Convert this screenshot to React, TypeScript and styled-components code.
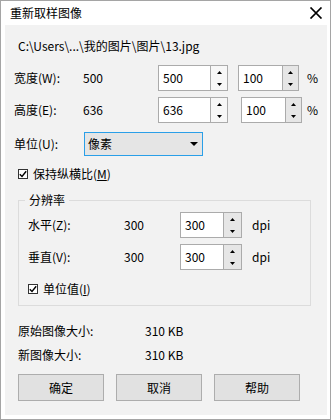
import React from 'react';
import styled, { createGlobalStyle } from 'styled-components';

const GlobalStyle = createGlobalStyle`
  html, body {
    margin: 0;
    padding: 0;
    background: #fff;
  }
  body {
    font-family: "Noto Sans CJK SC", "Liberation Sans", sans-serif;
    font-size: 12px;
    color: #000;
  }
  * {
    box-sizing: border-box;
  }
`;

const Window = styled.div`
  width: 331px;
  height: 420px;
  border: 1px solid #a5a5a5;
  background: #fff;
  display: flex;
  flex-direction: column;
`;

const TitleBar = styled.div`
  height: 24px;
  flex-shrink: 0;
  display: flex;
  align-items: center;
  justify-content: space-between;
  padding: 0 7px 0 9px;
`;

const Title = styled.span`
  font-size: 12px;
  line-height: 16px;
  color: #000;
`;

const CloseIcon = styled.svg`
  display: block;
`;

const Panel = styled.div`
  flex: 1;
  margin: 0 3px 4px 4px;
  background: #f2f2f2;
  padding: 12px 0 0 13px;
  display: flex;
  flex-direction: column;
`;

const TextLine = styled.div<{ $mt?: number }>`
  height: 18px;
  line-height: 18px;
  margin-top: ${({ $mt }) => $mt ?? 0}px;
  white-space: nowrap;
`;

const Row = styled.div<{ $h?: number; $mt?: number; $ml?: number }>`
  display: flex;
  align-items: center;
  height: ${({ $h }) => $h ?? 26}px;
  margin-top: ${({ $mt }) => $mt ?? 0}px;
  margin-left: ${({ $ml }) => $ml ?? 0}px;
`;

const Cell = styled.span<{ $w?: number; $ml?: number }>`
  flex-shrink: 0;
  ${({ $w }) => ($w ? `width: ${$w}px;` : '')}
  margin-left: ${({ $ml }) => $ml ?? 0}px;
  line-height: 16px;
  white-space: nowrap;
`;

const SpinBox = styled.div<{ $w: number; $ml?: number }>`
  width: ${({ $w }) => $w}px;
  height: 26px;
  margin-left: ${({ $ml }) => $ml ?? 0}px;
  flex-shrink: 0;
  display: flex;
  border: 1px solid #ababab;
  background: #fff;
`;

const SpinValue = styled.div`
  flex: 1;
  padding-left: 4px;
  line-height: 24px;
  font-size: 12px;
`;

const SpinButtons = styled.div<{ $w: number; $light?: boolean }>`
  width: ${({ $w }) => $w}px;
  border-left: 1px solid #ababab;
  background: ${({ $light }) => ($light ? '#f7f7f7' : '#e6e6e6')};
  display: flex;
  flex-direction: column;
`;

const SpinHalf = styled.div`
  flex: 1;
  display: flex;
  align-items: center;
  justify-content: center;
`;

const Dropdown = styled.div`
  width: 119px;
  height: 24px;
  display: flex;
  align-items: center;
  justify-content: space-between;
  padding: 0 4px 0 3px;
  border: 1px solid #2a9fe8;
  background: #e5e5e5;
  line-height: 16px;
`;

const CheckRow = styled.label<{ $mt?: number }>`
  display: flex;
  align-items: center;
  gap: 5px;
  height: 18px;
  margin-top: ${({ $mt }) => $mt ?? 0}px;
  line-height: 16px;
`;

const CheckBox = styled.span`
  width: 10px;
  height: 10px;
  border: 1px solid #333;
  background: #fff;
  display: flex;
  align-items: center;
  justify-content: center;
  flex-shrink: 0;
`;

const Group = styled.fieldset`
  width: 293px;
  margin: 9px 0 0 0;
  padding: 4px 0 7px 9px;
  border: 1px solid #dcdcdc;
  min-width: 0;
`;

const GroupTitle = styled.legend`
  padding: 0 4px;
  margin-left: -3px;
  line-height: 16px;
`;

const ButtonBar = styled.div`
  display: flex;
  gap: 12px;
  margin-top: 10px;
`;

const Button = styled.button`
  width: 86px;
  height: 27px;
  border: 1px solid #adadad;
  background: #e1e1e1;
  font-family: inherit;
  font-size: 12px;
  color: #000;
  padding: 0;
`;

const Arrow = ({ up }: { up?: boolean }) => (
  <svg width="5" height="3" viewBox="0 0 5 3">
    <path d={up ? 'M0 3 L2.5 0 L5 3 Z' : 'M0 0 L5 0 L2.5 3 Z'} fill="#000" />
  </svg>
);

const Spinner = ({
  value,
  w,
  bw,
  ml,
  light,
}: {
  value: string;
  w: number;
  bw: number;
  ml?: number;
  light?: boolean;
}) => (
  <SpinBox $w={w} $ml={ml}>
    <SpinValue>{value}</SpinValue>
    <SpinButtons $w={bw} $light={light}>
      <SpinHalf>
        <Arrow up />
      </SpinHalf>
      <SpinHalf>
        <Arrow />
      </SpinHalf>
    </SpinButtons>
  </SpinBox>
);

const Check = () => (
  <CheckBox>
    <svg width="8" height="8" viewBox="0 0 8 8">
      <path d="M0.8 4.2 L3 6.4 L7.2 1.2" stroke="#000" strokeWidth="1.4" fill="none" />
    </svg>
  </CheckBox>
);

export default function App() {
  return (
    <>
      <GlobalStyle />
      <Window>
        <TitleBar>
          <Title>重新取样图像</Title>
          <CloseIcon width="14" height="12" viewBox="0 0 14 12">
            <path d="M1.5 0.5 L12.5 11.5 M12.5 0.5 L1.5 11.5" stroke="#000" strokeWidth="1.7" />
          </CloseIcon>
        </TitleBar>
        <Panel>
          <TextLine>C:\Users\...\我的图片\图片\13.jpg</TextLine>

          <Row $mt={10} $ml={-4}>
            <Cell $w={69}>宽度(W):</Cell>
            <Cell $w={75}>500</Cell>
            <Spinner value="500" w={70} bw={17} light />
            <Spinner value="100" w={61} bw={16} ml={10} />
            <Cell $ml={8}>%</Cell>
          </Row>
          <Row $mt={6} $ml={-4}>
            <Cell $w={69}>高度(E):</Cell>
            <Cell $w={75}>636</Cell>
            <Spinner value="636" w={70} bw={17} light />
            <Spinner value="100" w={61} bw={16} ml={13} />
            <Cell $ml={5}>%</Cell>
          </Row>
          <Row $h={24} $mt={9} $ml={-4}>
            <Cell $w={70}>单位(U):</Cell>
            <Dropdown>
              <span>像素</span>
              <svg width="8" height="4" viewBox="0 0 8 4">
                <path d="M0 0 L8 0 L4 4 Z" fill="#000" />
              </svg>
            </Dropdown>
          </Row>

          <CheckRow $mt={9}>
            <Check />
            <span>
              保持纵横比(<u>M</u>)
            </span>
          </CheckRow>

          <Group>
            <GroupTitle>分辨率</GroupTitle>
            <Row>
              <Cell $w={96}>水平(Z):</Cell>
              <Cell $w={56}>300</Cell>
              <Spinner value="300" w={62} bw={18} />
              <Cell $ml={10}>dpi</Cell>
            </Row>
            <Row $mt={6}>
              <Cell $w={96}>垂直(V):</Cell>
              <Cell $w={56}>300</Cell>
              <Spinner value="300" w={62} bw={18} />
              <Cell $ml={10}>dpi</Cell>
            </Row>
            <CheckRow $mt={10}>
              <Check />
              <span>
                单位值(<u>I</u>)
              </span>
            </CheckRow>
          </Group>

          <Row $h={18} $mt={16}>
            <Cell $w={127}>原始图像大小:</Cell>
            <Cell>310 KB</Cell>
          </Row>
          <Row $h={18} $mt={6}>
            <Cell $w={127}>新图像大小:</Cell>
            <Cell>310 KB</Cell>
          </Row>

          <ButtonBar>
            <Button>确定</Button>
            <Button>取消</Button>
            <Button>帮助</Button>
          </ButtonBar>
        </Panel>
      </Window>
    </>
  );
}
